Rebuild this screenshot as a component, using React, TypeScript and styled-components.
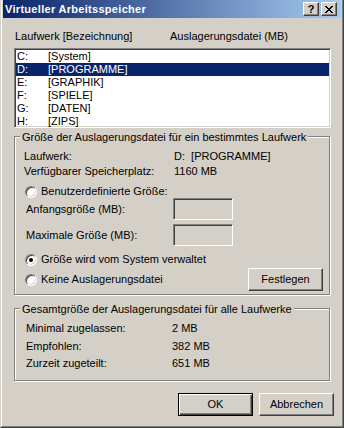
import React from 'react';
import styled, { createGlobalStyle, css } from 'styled-components';

const GlobalStyle = createGlobalStyle`
  html, body { margin: 0; padding: 0; background: #d4d0c8; }
  body { font-family: 'Liberation Sans', Arial, sans-serif; font-size: 11px; color: #000; }
  * { box-sizing: border-box; }
`;

const Window = styled.div`
  width: 344px;
  height: 428px;
  background: #d4d0c8;
  display: flex;
  border-left: 1px solid #d4d0c8;
  border-right: 1px solid #404040;
  border-bottom: 1px solid #404040;
`;

const Frame = styled.div`
  flex: 1;
  display: flex;
  flex-direction: column;
  border-left: 1px solid #ffffff;
  border-right: 1px solid #808080;
  border-bottom: 1px solid #808080;
  padding: 0 1px 1px 1px;
`;

const TitleBar = styled.div`
  height: 18px;
  display: flex;
  align-items: center;
  padding: 0 4px 0 2px;
  background: linear-gradient(to right, #0a246a, #a6caf0);
`;

const TitleText = styled.div`
  flex: 1;
  color: #fff;
  font-weight: bold;
  letter-spacing: 0.3px;
  line-height: 13px;
  white-space: nowrap;
`;

const TitleButtons = styled.div`
  display: flex;
  gap: 2px;
`;

const raised = css`
  border: 1px solid;
  border-color: #ffffff #404040 #404040 #ffffff;
  box-shadow: inset -1px -1px #808080, inset 1px 1px #d4d0c8;
`;

const CaptionButton = styled.div`
  width: 16px;
  height: 14px;
  background: #d4d0c8;
  display: flex;
  align-items: center;
  justify-content: center;
  font-weight: bold;
  font-size: 11px;
  line-height: 12px;
  ${raised}
`;

const Body = styled.div`
  flex: 1;
  display: flex;
  flex-direction: column;
  align-items: flex-start;
  padding: 12px 7px 0 11px;
`;

const ListHeader = styled.div`
  width: 317px;
  display: grid;
  grid-template-columns: 155px 1fr;
  padding-left: 1px;
  line-height: 13px;
  margin-bottom: 5px;
`;

const sunken = css`
  border: 1px solid;
  border-color: #808080 #ffffff #ffffff #808080;
  box-shadow: inset 1px 1px #404040, inset -1px -1px #d4d0c8;
`;

const ListBox = styled.div`
  width: 317px;
  height: 80px;
  background: #fff;
  padding: 1px;
  overflow: hidden;
  ${sunken}
`;

const ListRow = styled.div<{ $selected?: boolean }>`
  display: grid;
  grid-template-columns: 31px 1fr;
  height: 13px;
  line-height: 13px;
  padding-left: 1px;
  white-space: nowrap;
  background: ${(p) => (p.$selected ? '#0a246a' : 'transparent')};
  color: ${(p) => (p.$selected ? '#fff' : '#000')};
`;

const Group = styled.div<{ $height: number; $top: number }>`
  position: relative;
  width: 316px;
  height: ${(p) => p.$height}px;
  margin-top: ${(p) => p.$top}px;
  border: 1px solid #808080;
  box-shadow: inset 1px 1px #ffffff, 1px 1px #ffffff;
`;

const GroupCaption = styled.span`
  position: absolute;
  top: -6px;
  left: 5px;
  padding: 0 2px;
  background: #d4d0c8;
  line-height: 13px;
  white-space: nowrap;
`;

const GroupBody = styled.div<{ $pad: string }>`
  display: flex;
  flex-direction: column;
  padding: ${(p) => p.$pad};
`;

const InfoRow = styled.div<{ $col: number; $lh: number }>`
  display: grid;
  grid-template-columns: ${(p) => p.$col}px 1fr;
  line-height: ${(p) => p.$lh}px;
  white-space: nowrap;
`;

const RadioRow = styled.div<{ $top: number; $height?: number }>`
  display: flex;
  align-items: center;
  justify-content: space-between;
  height: ${(p) => p.$height ?? 13}px;
  margin-top: ${(p) => p.$top}px;
`;

const RadioLabel = styled.label`
  display: flex;
  align-items: center;
  gap: 4px;
  line-height: 13px;
  padding-left: 1px;
  white-space: nowrap;
`;

const Radio = styled.span<{ $checked?: boolean }>`
  flex: none;
  width: 12px;
  height: 12px;
  border-radius: 50%;
  background: #fff;
  display: flex;
  align-items: center;
  justify-content: center;
  border: 1px solid;
  border-color: #808080 #ffffff #ffffff #808080;
  box-shadow: inset 1px 1px #404040, inset -1px -1px #d4d0c8;
  &::after {
    content: '';
    width: 4px;
    height: 4px;
    border-radius: 50%;
    background: #000;
    display: ${(p) => (p.$checked ? 'block' : 'none')};
  }
`;

const FieldRow = styled.div<{ $top: number }>`
  display: grid;
  grid-template-columns: 149px 60px;
  align-items: center;
  height: 22px;
  margin-top: ${(p) => p.$top}px;
`;

const FieldLabel = styled.span`
  padding-left: 2px;
  line-height: 13px;
  white-space: nowrap;
`;

const TextBox = styled.div`
  height: 22px;
  background: #d4d0c8;
  ${sunken}
`;

const PushButton = styled.button<{ $default?: boolean }>`
  width: 75px;
  height: 23px;
  padding: 0;
  background: #d4d0c8;
  font: inherit;
  color: #000;
  line-height: 13px;
  ${(p) =>
    p.$default
      ? css`
          border: 1px solid #000;
          box-shadow: inset 1px 1px #ffffff, inset -1px -1px #404040, inset -2px -2px #808080;
        `
      : raised}
`;

const ButtonRow = styled.div`
  align-self: stretch;
  display: flex;
  justify-content: flex-end;
  gap: 6px;
  margin-top: 12px;
`;

const drives = [
  { d: 'C:', n: '[System]' },
  { d: 'D:', n: '[PROGRAMME]', sel: true },
  { d: 'E:', n: '[GRAPHIK]' },
  { d: 'F:', n: '[SPIELE]' },
  { d: 'G:', n: '[DATEN]' },
  { d: 'H:', n: '[ZIPS]' },
];

const CloseGlyph = () => (
  <svg width="8" height="7" viewBox="0 0 8 7" shapeRendering="crispEdges">
    <path
      fill="#000"
      d="M0 0h2v1h-2zM6 0h2v1h-2zM1 1h2v1h-2zM5 1h2v1h-2zM2 2h4v1h-4zM3 3h2v1h-2zM2 4h4v1h-4zM1 5h2v1h-2zM5 5h2v1h-2zM0 6h2v1h-2zM6 6h2v1h-2z"
    />
  </svg>
);

export default function App() {
  return (
    <>
      <GlobalStyle />
      <Window>
        <Frame>
          <TitleBar>
            <TitleText>Virtueller Arbeitsspeicher</TitleText>
            <TitleButtons>
              <CaptionButton>?</CaptionButton>
              <CaptionButton>
                <CloseGlyph />
              </CaptionButton>
            </TitleButtons>
          </TitleBar>
          <Body>
            <ListHeader>
              <span>Laufwerk [Bezeichnung]</span>
              <span>Auslagerungsdatei (MB)</span>
            </ListHeader>
            <ListBox>
              {drives.map((r) => (
                <ListRow key={r.d} $selected={r.sel}>
                  <span>{r.d}</span>
                  <span>{r.n}</span>
                </ListRow>
              ))}
            </ListBox>

            <Group $height={159} $top={8}>
              <GroupCaption>Größe der Auslagerungsdatei für ein bestimmtes Laufwerk</GroupCaption>
              <GroupBody $pad="12px 6px 0 9px">
                <InfoRow $col={150} $lh={15}>
                  <span>Laufwerk:</span>
                  <span>D:&nbsp;&nbsp;[PROGRAMME]</span>
                </InfoRow>
                <InfoRow $col={150} $lh={15}>
                  <span>Verfügbarer Speicherplatz:</span>
                  <span>1160 MB</span>
                </InfoRow>
                <RadioRow $top={6}>
                  <RadioLabel>
                    <Radio />
                    Benutzerdefinierte Größe:
                  </RadioLabel>
                </RadioRow>
                <FieldRow $top={0}>
                  <FieldLabel>Anfangsgröße (MB):</FieldLabel>
                  <TextBox />
                </FieldRow>
                <FieldRow $top={4}>
                  <FieldLabel>Maximale Größe (MB):</FieldLabel>
                  <TextBox />
                </FieldRow>
                <RadioRow $top={7}>
                  <RadioLabel>
                    <Radio $checked />
                    Größe wird vom System verwaltet
                  </RadioLabel>
                </RadioRow>
                <RadioRow $top={2} $height={23}>
                  <RadioLabel>
                    <Radio />
                    Keine Auslagerungsdatei
                  </RadioLabel>
                  <PushButton>Festlegen</PushButton>
                </RadioRow>
              </GroupBody>
            </Group>

            <Group $height={73} $top={13}>
              <GroupCaption>Gesamtgröße der Auslagerungsdatei für alle Laufwerke</GroupCaption>
              <GroupBody $pad="11px 0 0 11px">
                <InfoRow $col={146} $lh={17.5}>
                  <span>Minimal zugelassen:</span>
                  <span>2 MB</span>
                </InfoRow>
                <InfoRow $col={146} $lh={17.5}>
                  <span>Empfohlen:</span>
                  <span>382 MB</span>
                </InfoRow>
                <InfoRow $col={146} $lh={17.5}>
                  <span>Zurzeit zugeteilt:</span>
                  <span>651 MB</span>
                </InfoRow>
              </GroupBody>
            </Group>

            <ButtonRow>
              <PushButton $default>OK</PushButton>
              <PushButton>Abbrechen</PushButton>
            </ButtonRow>
          </Body>
        </Frame>
      </Window>
    </>
  );
}
